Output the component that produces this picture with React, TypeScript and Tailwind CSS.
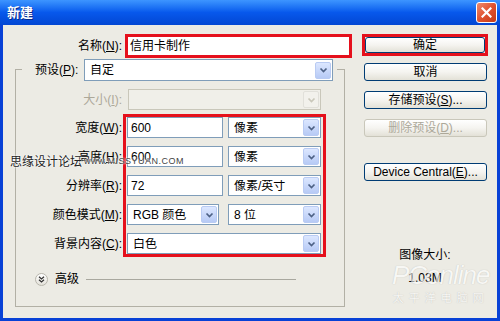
import React from "react";

const Chevron = ({ disabled }: { disabled?: boolean }) => (
  <svg width="9" height="6" viewBox="0 0 9 6">
    <path d="M1.5 1.5l3 3 3-3" fill="none" stroke={disabled ? "#C9C7BA" : "#4D6185"} strokeWidth="1.7" />
  </svg>
);

const Select = ({ value, className = "", disabled }: { value?: string; className?: string; disabled?: boolean }) => (
  <div
    className={`flex h-[21px] items-center border ${
      disabled ? "border-[#C9C7BA] bg-[#F0EFE9]" : "border-[#7F9DB9] bg-white"
    } ${className}`}
  >
    <span className="flex-1 truncate pl-[5px] leading-none">{value}</span>
    <span
      className={`mr-[1px] flex h-[17px] w-[16px] items-center justify-center rounded-[2px] border ${
        disabled ? "border-[#E1E0DA] bg-[#F2F1EC]" : "border-[#B9CBF3] bg-gradient-to-b from-[#DCE7FF] to-[#B7CAF5]"
      }`}
    >
      <Chevron disabled={disabled} />
    </span>
  </div>
);

const Input = ({ value, className = "" }: { value: string; className?: string }) => (
  <div className={`flex h-[21px] items-center border border-[#7F9DB9] bg-white pl-[3px] ${className}`}>{value}</div>
);

const Btn = ({ children, disabled, className = "" }: { children: React.ReactNode; disabled?: boolean; className?: string }) => (
  <div
    className={`flex items-center justify-center rounded-[3px] border bg-gradient-to-b from-white via-[#F5F4F0] to-[#E3E1D7] ${
      disabled ? "border-[#C9C7BA] text-[#ACA899]" : "border-[#003C74] text-black"
    } ${className}`}
  >
    {children}
  </div>
);

export default function App() {
  return (
    <div className="relative flex h-[321px] w-[500px] flex-col overflow-hidden bg-[#0841D6] font-['Liberation_Sans','Noto_Sans_CJK_SC',sans-serif] text-[12px] text-black">
      {/* 标题栏 */}
      <div className="flex h-[25px] items-center bg-gradient-to-b from-[#3D95FF] via-[#0758EC] to-[#0347D3] pl-[7px] pr-[3px]">
        <span className="text-[13px] font-bold text-white [text-shadow:1px_1px_0_#0A2A8A]">新建</span>
        <div className="ml-auto flex h-[21px] w-[21px] items-center justify-center rounded-[3px] border border-white bg-gradient-to-br from-[#EC8A6E] via-[#E0522E] to-[#C43A16]">
          <svg width="11" height="11" viewBox="0 0 11 11">
            <path d="M1.5 1.5l8 8M9.5 1.5l-8 8" stroke="white" strokeWidth="2.2" strokeLinecap="square" />
          </svg>
        </div>
      </div>

      {/* 对话框内容 */}
      <div className="mx-[3px] mb-[3px] flex flex-1 bg-[#ECEBE4]">
        {/* 左侧 */}
        <div className="ml-[12px] flex w-[337px] flex-col pt-[9px]">
          <div className="flex h-[24px] items-center">
            <span className="w-[107px] text-right">
              名称(<u>N</u>):
            </span>
            <div className="ml-[3px] flex h-[24px] w-[227px] items-center border-[3px] border-[#E5101C] bg-white pl-[2px]">
              信用卡制作
            </div>
          </div>

          <div className="mt-[11px] flex h-[238px] w-[330px] flex-col border border-[#B2B0A5]">
            <div className="-mt-[11px] ml-[6px] mr-[7px] flex h-[22px] items-center bg-[#ECEBE4] pl-[13px]">
              <span>
                预设(<u>P</u>):
              </span>
              <Select value="自定" className="ml-auto mr-[4px] h-[22px] w-[249px]" />
            </div>

            <div className="flex">
              <div className="flex w-[106px] flex-col items-end">
                <span className="mt-[8px] flex h-[21px] items-center text-[#ACA899]">
                  大小(<u>I</u>):
                </span>
                <div className="mt-[7px] flex flex-col items-end gap-[8px]">
                  <span className="flex h-[21px] items-center">
                    宽度(<u>W</u>):
                  </span>
                  <span className="flex h-[21px] items-center">
                    高度(<u>H</u>):
                  </span>
                  <span className="flex h-[21px] items-center">
                    分辨率(<u>R</u>):
                  </span>
                  <span className="flex h-[21px] items-center">
                    颜色模式(<u>M</u>):
                  </span>
                  <span className="flex h-[21px] items-center">
                    背景内容(<u>C</u>):
                  </span>
                </div>
              </div>

              <div className="ml-[1px] flex flex-col">
                <Select disabled className="ml-[5px] mt-[8px] w-[193px]" />
                <div className="mt-[4px] flex w-[203px] flex-col gap-[8px] border-[3px] border-[#E5101C] px-[1px]">
                  <div className="flex">
                    <Input value="600" className="w-[96px]" />
                    <Select value="像素" className="ml-[5px] w-[93px]" />
                  </div>
                  <div className="flex">
                    <Input value="600" className="w-[96px]" />
                    <Select value="像素" className="ml-[5px] w-[93px]" />
                  </div>
                  <div className="flex">
                    <Input value="72" className="w-[96px]" />
                    <Select value="像素/英寸" className="ml-[5px] w-[93px]" />
                  </div>
                  <div className="flex">
                    <Select value="RGB 颜色" className="w-[92px]" />
                    <Select value="8 位" className="ml-[9px] w-[93px]" />
                  </div>
                  <Select value="白色" className="w-[194px]" />
                </div>
              </div>
            </div>

            <div className="ml-[19px] mr-[48px] mt-[15px] flex h-[14px] items-center">
              <span className="flex h-[13px] w-[13px] items-center justify-center rounded-full border border-[#B8B6AC] bg-gradient-to-b from-white to-[#E4E2DA]">
                <svg width="7" height="7" viewBox="0 0 7 7">
                  <path d="M1 0.8l2.5 2.2 2.5-2.2M1 3.8l2.5 2.2 2.5-2.2" fill="none" stroke="#333" strokeWidth="1.2" />
                </svg>
              </span>
              <span className="ml-[7px]">高级</span>
              <div className="ml-[7px] h-px flex-1 bg-[#A9A89F]" />
            </div>
          </div>
        </div>

        {/* 右侧按钮 */}
        <div className="ml-[10px] flex w-[126px] flex-col pt-[9px]">
          <div className="h-[22px] border-[3px] border-[#E5101C]">
            <Btn className="h-full">确定</Btn>
          </div>
          <Btn className="ml-[2px] mt-[7px] h-[18px] w-[123px]">取消</Btn>
          <Btn className="ml-[2px] mt-[10px] h-[18px] w-[123px]">
            存储预设(<u>S</u>)...
          </Btn>
          <Btn disabled className="ml-[2px] mt-[10px] h-[18px] w-[123px]">
            删除预设(<u>D</u>)...
          </Btn>
          <Btn className="ml-[2px] mt-[26px] h-[18px] w-[123px]">
            Device Central(<u>E</u>)...
          </Btn>
          <div className="mt-[66px] text-center leading-[16px]">图像大小:</div>
          <div className="mt-[7px] text-center leading-[16px]">1.03M</div>
        </div>
      </div>

      {/* 水印 */}
      <div className="absolute left-[10px] top-[153px] flex items-center [text-shadow:0_0_2px_#fff,0_0_2px_#fff]">
        <span className="text-[12px] text-[#222]">思缘设计论坛</span>
        <span className="ml-[2px] text-[9px] tracking-[0.5px] text-[#444]">www.MISSYUAN.COM</span>
      </div>
      <div className="absolute left-[392px] top-[262px] flex flex-col items-center opacity-60">
        <span className="text-[26px] italic leading-none tracking-[-1px] text-white [text-shadow:0_0_1px_#9a9a9a]">PConline</span>
        <span className="mt-[2px] text-[11px] tracking-[5px] text-white [text-shadow:0_0_1px_#9a9a9a]">太平洋电脑网</span>
      </div>
    </div>
  );
}
